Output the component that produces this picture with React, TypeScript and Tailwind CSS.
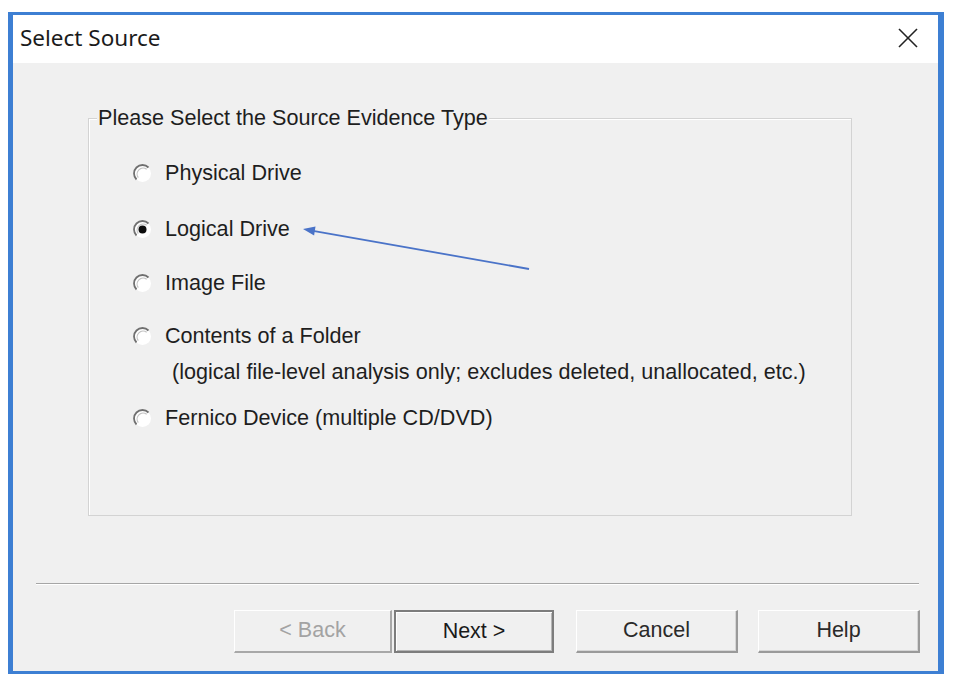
import React from 'react';

const options = [
  { label: 'Physical Drive', checked: false },
  { label: 'Logical Drive', checked: true },
  { label: 'Image File', checked: false },
  { label: 'Contents of a Folder', checked: false, note: '(logical file-level analysis only; excludes deleted, unallocated, etc.)' },
  { label: 'Fernico Device (multiple CD/DVD)', checked: false },
];

// margin above each row, tuned to the screenshot
const rowGap = ['mt-0', 'mt-[32px]', 'mt-[30px]', 'mt-[29px]', 'mt-[22px]'];

function Radio({ checked }: { checked: boolean }) {
  return (
    <svg width="19" height="19" viewBox="0 0 19 19" className="shrink-0">
      <circle cx="9.5" cy="9.5" r="8.5" fill="#ffffff" />
      <path d="M3.5 15.5 A8.3 8.3 0 0 1 15.5 3.5" fill="none" stroke="#707070" strokeWidth="1.8" />
      <path d="M5.3 13.7 A6 6 0 0 1 13.7 5.3" fill="none" stroke="#c4c4c4" strokeWidth="1.2" />
      {checked && <circle cx="9.5" cy="9.5" r="4" fill="#0d0d0d" />}
    </svg>
  );
}

function Button({ children, variant = 'normal', width }: { children: React.ReactNode; variant?: 'normal' | 'default' | 'disabled'; width: string }) {
  const base = 'h-[43px] flex items-center justify-center text-[21.5px] leading-none';
  if (variant === 'default') {
    return (
      <div className={`${base} ${width} border-2 border-[#7d7d7d] text-[#1a1a1a] shadow-[inset_1px_1px_0_#ffffff,inset_-1px_-1px_0_#b5b5b5]`}>
        {children}
      </div>
    );
  }
  if (variant === 'disabled') {
    return (
      <div className={`${base} ${width} border-t border-l border-[#ffffff] border-r-2 border-b-2 border-r-[#a8a8a8] border-b-[#a8a8a8] text-[#a3a3a3]`}>
        {children}
      </div>
    );
  }
  return (
    <div className={`${base} ${width} border-t border-l border-[#ffffff] border-r-2 border-b-2 border-r-[#9a9a9a] border-b-[#9a9a9a] text-[#2a2a2a] shadow-[inset_-1px_-1px_0_#d6d6d6]`}>
      {children}
    </div>
  );
}

export default function App() {
  return (
    <div className="relative w-[954px] h-[686px] bg-white overflow-hidden" style={{ fontFamily: '"Liberation Sans", Arial, sans-serif' }}>
      <div className="ml-[8px] mt-[12px] w-[936px] h-[662px] border-t-[3px] border-b-[3px] border-l-[5px] border-r-[6px] border-[#3d7fd3] flex flex-col bg-[#f0f0f0]">
        {/* Title bar */}
        <div className="h-[48px] shrink-0 bg-white flex items-center justify-between pl-[7px] pr-[20px] pb-[3px]">
          <span className="text-[22.5px] text-[#1b1b1b]" style={{ fontFamily: '"Noto Sans", "Open Sans", sans-serif' }}>
            Select Source
          </span>
          <svg width="20" height="20" viewBox="0 0 20 20">
            <line x1="1" y1="1" x2="19" y2="19" stroke="#222" strokeWidth="1.6" />
            <line x1="19" y1="1" x2="1" y2="19" stroke="#222" strokeWidth="1.6" />
          </svg>
        </div>

        {/* Body */}
        <div className="flex-1 flex flex-col">
          <div className="relative ml-[75px] mt-[55px] w-[764px] h-[398px] border border-[#d3d3d3] shadow-[inset_1px_1px_0_#ffffff]">
            <span className="absolute -top-[13px] left-[8px] px-[1px] bg-[#f0f0f0] text-[21.6px] leading-[24px] text-[#1e1e1e]">
              Please Select the Source Evidence Type
            </span>
            <div className="flex flex-col pt-[42px] pl-[44px]">
              {options.map((o, i) => (
                <div key={o.label} className={rowGap[i]}>
                  <div className="flex items-center gap-[13px] h-[24px]">
                    <Radio checked={o.checked} />
                    <span className="text-[21.6px] leading-[24px] text-[#1e1e1e]">{o.label}</span>
                  </div>
                  {o.note && (
                    <div className="mt-[12px] pl-[39px] text-[21.6px] leading-[24px] text-[#1e1e1e]">{o.note}</div>
                  )}
                </div>
              ))}
            </div>
          </div>

          <div className="ml-[23px] mt-[67px] w-[883px] border-t border-[#a6a6a6] border-b border-b-white" />

          <div className="flex justify-end mt-[25px] pr-[18px]">
            <Button variant="disabled" width="w-[158px]">&lt; Back</Button>
            <div className="w-[2px]" />
            <Button variant="default" width="w-[160px]">Next &gt;</Button>
            <div className="w-[22px]" />
            <Button width="w-[162px]">Cancel</Button>
            <div className="w-[20px]" />
            <Button width="w-[162px]">Help</Button>
          </div>
        </div>
      </div>

      {/* annotation arrow */}
      <svg className="absolute left-0 top-0 pointer-events-none" width="954" height="686" viewBox="0 0 954 686">
        <line x1="529" y1="269" x2="313" y2="230.8" stroke="#4a73c8" strokeWidth="1.8" />
        <polygon points="303,229 315.5,226.6 314.1,235.4" fill="#4a73c8" />
      </svg>
    </div>
  );
}
